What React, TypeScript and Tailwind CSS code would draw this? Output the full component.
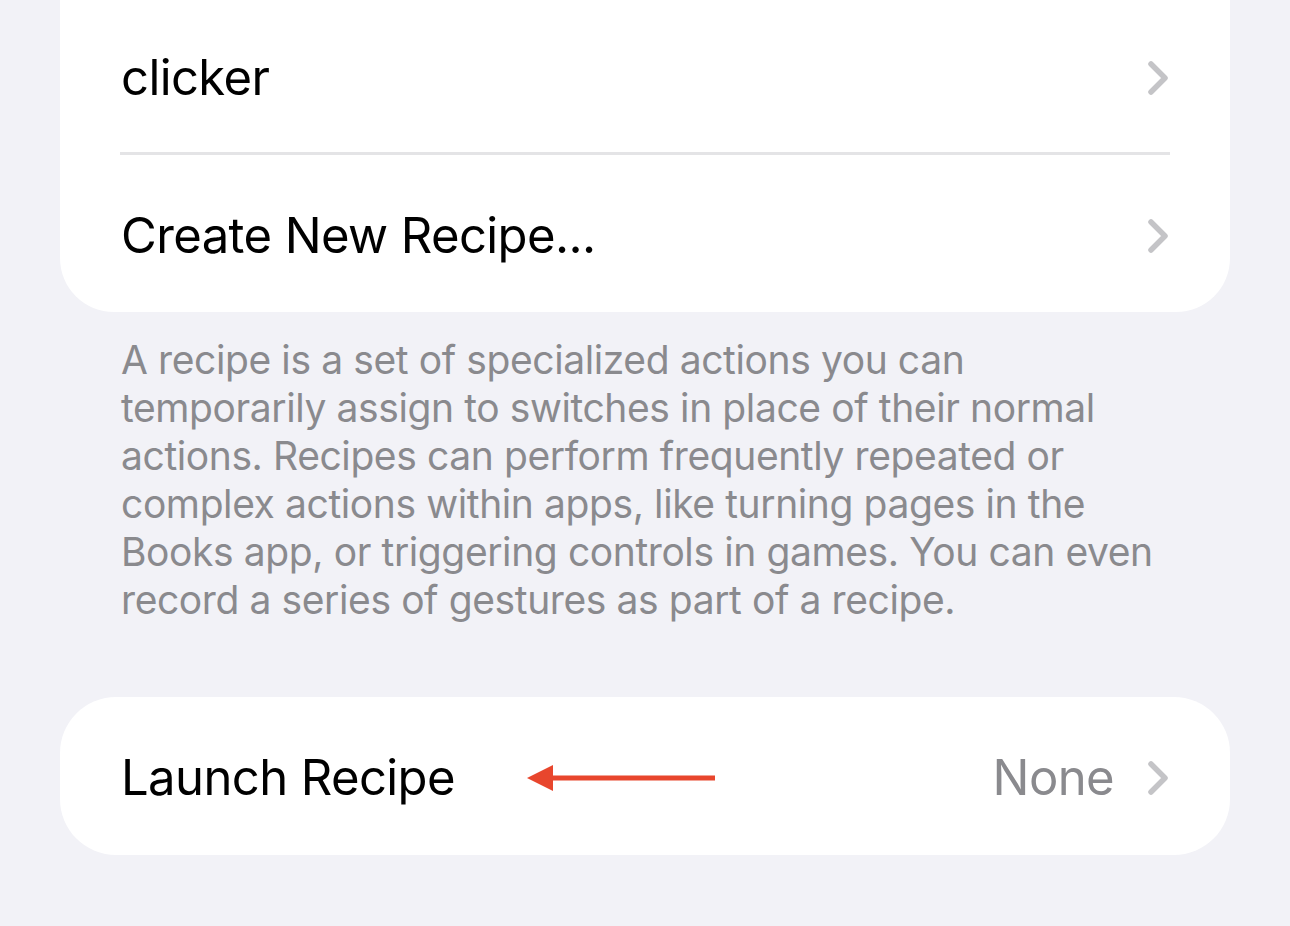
const font = { fontFamily: "Inter, 'Liberation Sans', sans-serif" };

function Chevron() {
  return (
    <svg width="24" height="36" viewBox="0 0 24 36" className="shrink-0">
      <path
        d="M5 4 L19 18 L5 32"
        fill="none"
        stroke="#c4c4c7"
        strokeWidth="5.5"
        strokeLinecap="round"
        strokeLinejoin="round"
      />
    </svg>
  );
}

function Row({ label, value, arrow }: { label: string; value?: string; arrow?: boolean }) {
  return (
    <div className="flex items-center h-full pt-[4px] pl-[61px] pr-[60px]">
      <span className="text-[49px] text-black tracking-[-0.6px]">{label}</span>
      {arrow && (
        <svg width="188" height="30" viewBox="0 0 188 30" className="ml-[72px]">
          <path d="M20 15 L188 15" stroke="#e8462d" strokeWidth="5" />
          <path d="M0 15 L26 2 L26 28 Z" fill="#e8462d" />
        </svg>
      )}
      <div className="flex-1" />
      {value && <span className="text-[49px] text-[#8a8a8e] mr-[32px] tracking-[-0.6px]">{value}</span>}
      <Chevron />
    </div>
  );
}

export default function App() {
  return (
    <div className="w-[1290px] h-[926px] overflow-hidden bg-[#f2f2f7]" style={font}>
      <div className="mx-[60px] -mt-[4px] bg-white rounded-b-[54px]">
        <div className="h-[156px] pt-[4px]">
          <Row label="clicker" />
        </div>
        <div className="mx-[60px] h-[3px] bg-[#e4e4e6]" />
        <div className="h-[157px]">
          <Row label="Create New Recipe..." />
        </div>
      </div>
      <p className="mx-[121px] mt-[24px] text-[39px] leading-[48px] text-[#8a8a8e] tracking-[-0.4px]">
        A recipe is a set of specialized actions you can temporarily assign to switches in place of their
        normal actions. Recipes can perform frequently repeated or complex actions within apps, like turning
        pages in the Books app, or triggering controls in games. You can even record a series of gestures as
        part of a recipe.
      </p>
      <div className="mx-[60px] mt-[73px] h-[158px] bg-white rounded-[56px]">
        <Row label="Launch Recipe" value="None" arrow />
      </div>
    </div>
  );
}
